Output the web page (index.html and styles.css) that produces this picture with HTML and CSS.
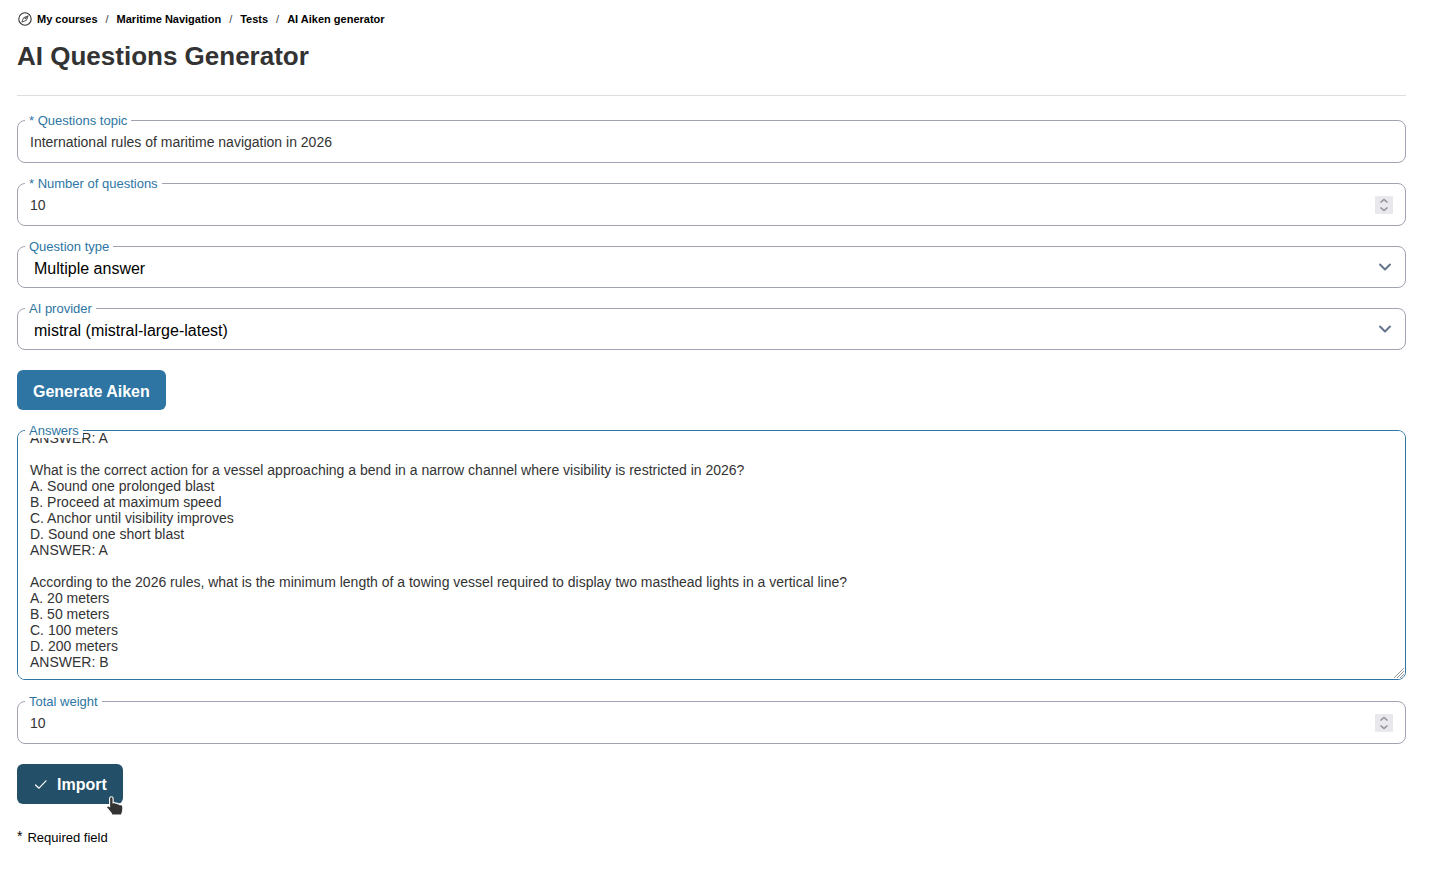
FILE: index.html
```html
<!DOCTYPE html>
<html lang="en">
<head>
<meta charset="utf-8">
<title>AI Questions Generator</title>
<link rel="stylesheet" href="styles.css">
</head>
<body>
<main class="page">
  <nav class="breadcrumb" aria-label="Breadcrumb">
    <svg class="compass" viewBox="0 0 14 14" aria-hidden="true"><circle cx="7" cy="7" r="6.2" fill="none" stroke="#333" stroke-width="1.1"/><path d="M10.2 3.8 8.4 8.3 3.8 10.2 5.6 5.7Z" fill="none" stroke="#444" stroke-width=".9" stroke-linejoin="round"/><path d="M9.8 4.2 7.6 7.6 6 6Z" fill="#555"/></svg>
    <a href="#">My courses</a><span class="slash">/</span><a href="#">Maritime Navigation</a><span class="slash">/</span><a href="#">Tests</a><span class="slash">/</span><a href="#">AI Aiken generator</a>
  </nav>
  <h1 class="title">AI Questions Generator</h1>
  <form class="form">
    <div class="field">
      <input class="control" id="topic" type="text" value="International rules of maritime navigation in 2026">
      <label class="label" for="topic">* Questions topic</label>
    </div>
    <div class="field">
      <input class="control number" id="count" type="number" value="10">
      <label class="label" for="count">* Number of questions</label>
      <svg class="spinner" viewBox="0 0 18 18" aria-hidden="true"><path d="M5.5 6.5 9 3.5l3.5 3M5.5 11.5 9 14.5l3.5-3"/></svg>
    </div>
    <div class="field">
      <select class="control select" id="type"><option>Multiple answer</option></select>
      <label class="label" for="type">Question type</label>
      <svg class="chevron" viewBox="0 0 14 14" aria-hidden="true"><path d="M2 4.5 7 9.5l5-5"/></svg>
    </div>
    <div class="field">
      <select class="control select" id="provider"><option>mistral (mistral-large-latest)</option></select>
      <label class="label" for="provider">AI provider</label>
      <svg class="chevron" viewBox="0 0 14 14" aria-hidden="true"><path d="M2 4.5 7 9.5l5-5"/></svg>
    </div>
    <button class="button generate" type="button">Generate Aiken</button>
    <div class="field">
      <textarea class="control answers" id="answers" spellcheck="false">ANSWER: A

What is the correct action for a vessel approaching a bend in a narrow channel where visibility is restricted in 2026?
A. Sound one prolonged blast
B. Proceed at maximum speed
C. Anchor until visibility improves
D. Sound one short blast
ANSWER: A

According to the 2026 rules, what is the minimum length of a towing vessel required to display two masthead lights in a vertical line?
A. 20 meters
B. 50 meters
C. 100 meters
D. 200 meters
ANSWER: B</textarea>
      <label class="label" for="answers">Answers</label>
      <svg class="grip" viewBox="0 0 12 12" aria-hidden="true"><path d="M1 11 11 1M4 11l7-7M7 11l4-4"/></svg>
    </div>
    <div class="field">
      <input class="control number" id="weight" type="number" value="10">
      <label class="label" for="weight">Total weight</label>
      <svg class="spinner" viewBox="0 0 18 18" aria-hidden="true"><path d="M5.5 6.5 9 3.5l3.5 3M5.5 11.5 9 14.5l3.5-3"/></svg>
    </div>
    <button class="button import" type="button">
      <svg class="check" viewBox="0 0 16 16" aria-hidden="true"><path d="M2.5 8 6 11.2l7-7.4"/></svg>
      <span>Import</span>
      <svg class="cursor" viewBox="0 0 18 20" aria-hidden="true"><path d="M5.3.8c1.3 0 1.8.8 1.8 1.8v4.2c1.2-.5 2.1-.2 2.5.5 1-.3 1.9 0 2.3.7 1-.2 1.8.1 2.1.8 1.6-.3 2.8.6 2.8 2v3.3c0 1.8-1.1 2.5-1.1 4.9H5.9c0-1.6-1.4-2.7-2.4-3.9L1 12c-.9-1.2.3-2.5 1.6-2l1 .5V2.6c0-1 .5-1.8 1.7-1.8Z" fill="#333" stroke="#fff" stroke-width="1.1"/></svg>
    </button>
  </form>
  <p class="required"><span class="star">*</span> Required field</p>
</main>
<script src="script.js"></script>
</body>
</html>
```

FILE: styles.css
```css
* { box-sizing: border-box; }

body {
  margin: 0;
  background: #fff;
  color: #333;
  font-family: "Liberation Sans", Arial, sans-serif;
}

.page { padding: 12px 25px 24px 17px; }

.breadcrumb {
  display: flex;
  align-items: center;
  font-size: 11px;
  line-height: 14px;
}
.breadcrumb a { color: #000; font-weight: 700; text-decoration: none; }
.compass { width: 14px; height: 14px; margin: 0 5px 0 1px; }
.slash { margin: 0 8px; color: #444; }

.title {
  margin: 14px 0 24px;
  padding-bottom: 23px;
  border-bottom: 1px solid #dcdee0;
  font-size: 26px;
  line-height: 32px;
}

.form {
  display: flex;
  flex-direction: column;
  align-items: flex-start;
  gap: 20px;
}

.field { position: relative; width: 100%; }

.control {
  display: block;
  width: 100%;
  height: 43px;
  margin: 0;
  padding: 0 12px;
  border: 1px solid #a0a3b1;
  border-radius: 8px;
  outline: 0;
  background: #fff;
  color: #333;
  font: 14px/16px "Liberation Sans", Arial, sans-serif;
}
.number { appearance: textfield; }
.number::-webkit-inner-spin-button { appearance: none; margin: 0; }
.select {
  height: 42px;
  padding: 4px 16px 0;
  appearance: none;
  color: #000;
  font-size: 16px;
  line-height: 20px;
}
.answers {
  height: 250px;
  margin-bottom: 1px;
  padding: 8px 12px 9px;
  border-color: #2e75a3;
  resize: none;
  scrollbar-width: none;
}

.label {
  position: absolute;
  top: -7px;
  left: 8px;
  padding: 0 4px;
  background: #fff;
  color: #2e75a3;
  font-size: 13px;
  line-height: 15px;
}

.spinner, .chevron, .grip {
  position: absolute;
  pointer-events: none;
  fill: none;
}
.spinner {
  top: 13px;
  right: 13px;
  width: 18px;
  height: 18px;
  background: #e9e9ed;
  stroke: #8f8f9d;
  stroke-width: 1.5;
}
.chevron {
  top: 14px;
  right: 14px;
  width: 14px;
  height: 14px;
  stroke: #64748b;
  stroke-width: 2;
  stroke-linecap: round;
  stroke-linejoin: round;
}
.grip {
  right: 1px;
  bottom: 2px;
  width: 12px;
  height: 12px;
  stroke: #999;
  stroke-width: 1;
}

.button {
  position: relative;
  display: flex;
  align-items: center;
  height: 40px;
  padding: 2px 16px 0;
  border: 0;
  border-radius: 6px;
  background: #2e75a3;
  color: #fff;
  font: 700 16px/20px "Liberation Sans", Arial, sans-serif;
}
.generate { padding-top: 4px; }
.import { gap: 8px; background: #244f68; }
.check {
  width: 16px;
  height: 16px;
  fill: none;
  stroke: #fff;
  stroke-width: 1.2;
  stroke-linecap: round;
  stroke-linejoin: round;
}
.cursor {
  position: absolute;
  right: -1px;
  bottom: -12px;
  width: 18px;
  height: 20px;
}

.required {
  display: flex;
  gap: 5px;
  margin: 25px 0 0;
  color: #000;
  font-size: 13px;
  line-height: 18px;
}
.star { font-size: 14px; line-height: 14px; }
```

FILE: script.js
```js
// Keep the last generated question in view.
const answers = document.getElementById("answers");
answers.scrollTop = answers.scrollHeight;
```
